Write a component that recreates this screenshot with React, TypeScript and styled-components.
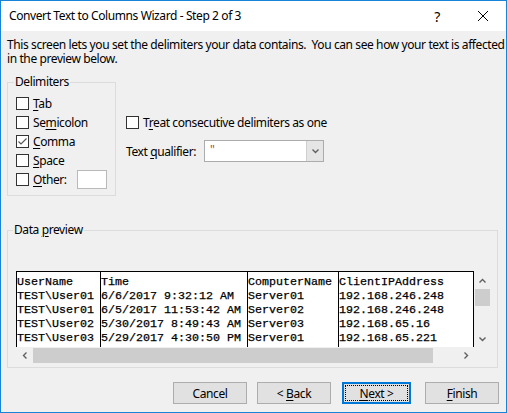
import React from "react";
import styled, { createGlobalStyle } from "styled-components";

const Global = createGlobalStyle`
  html, body { margin: 0; padding: 0; background: #ffffff; }
  * { box-sizing: border-box; }
`;

const UI_FONT = `"Noto Sans", "Liberation Sans", sans-serif`;
const MONO_FONT = `"Liberation Mono", "Courier New", monospace`;

const Window = styled.div`
  width: 507px;
  height: 413px;
  border: 1px solid #1883d7;
  display: flex;
  flex-direction: column;
  font-family: ${UI_FONT};
  font-size: 12px;
  letter-spacing: -0.4px;
  color: #000;
  background: #f0f0f0;
`;

const TitleBar = styled.div`
  height: 30px;
  flex: none;
  background: #ffffff;
  display: flex;
  align-items: center;
  padding-left: 8px;
`;

const Title = styled.div`
  flex: 1;
  font-size: 12px;
  line-height: 16px;
  white-space: nowrap;
`;

const CaptionButton = styled.div`
  width: 46px;
  height: 30px;
  display: flex;
  align-items: center;
  justify-content: center;
  font-size: 14px;
  color: #000;
`;

const Body = styled.div`
  flex: 1;
  display: flex;
  flex-direction: column;
  padding: 0 6px;
`;

const Description = styled.div`
  margin-top: 7px;
  display: flex;
  flex-direction: column;
`;

const DescriptionLine = styled.div`
  height: 14px;
  line-height: 14px;
  white-space: pre;
`;

const TopSection = styled.div`
  display: flex;
  align-items: flex-start;
  margin-top: 16px;
`;

const GroupBox = styled.div<{ $w: number; $h: number }>`
  position: relative;
  width: ${(p) => p.$w}px;
  height: ${(p) => p.$h}px;
  border: 1px solid #dcdcdc;
  flex: none;
`;

const GroupTitle = styled.span<{ $left: number }>`
  position: absolute;
  top: -8px;
  left: ${(p) => p.$left}px;
  padding: 0 1px;
  line-height: 14px;
  background: #f0f0f0;
  white-space: nowrap;
`;

const CheckList = styled.div`
  padding: 11px 0 0 8px;
  display: flex;
  flex-direction: column;
`;

const CheckRow = styled.label`
  height: 19px;
  display: flex;
  align-items: center;
  white-space: nowrap;
`;

const Box = styled.span`
  width: 13px;
  height: 13px;
  flex: none;
  border: 1px solid #333333;
  background: #ffffff;
  margin-right: 4px;
  display: flex;
  align-items: center;
  justify-content: center;
`;

const Key = styled.span`
  text-decoration: underline;
  text-underline-offset: 2px;
`;

const OtherInput = styled.span`
  width: 30px;
  height: 19px;
  margin-left: 10px;
  background: #ffffff;
  border: 1px solid #b9b9b9;
`;

const Options = styled.div`
  margin-left: 10px;
  display: flex;
  flex-direction: column;
`;

const TreatRow = styled(CheckRow)`
  margin-top: 31px;
`;

const QualifierRow = styled.div`
  margin-top: 8px;
  height: 22px;
  display: flex;
  align-items: center;
`;

const QualifierLabel = styled.span`
  width: 78px;
  white-space: nowrap;
`;

const Combo = styled.div`
  width: 120px;
  height: 22px;
  display: flex;
  border: 1px solid #acacac;
  background: #ffffff;
`;

const ComboValue = styled.div`
  flex: 1;
  padding-left: 5px;
  line-height: 18px;
  font-size: 12px;
  color: #c1442c;
`;

const ComboButton = styled.div`
  width: 17px;
  display: flex;
  align-items: center;
  justify-content: center;
  background: #e5e5e5;
  border-left: 1px solid #cfcfcf;
`;

const PreviewGroup = styled(GroupBox)`
  margin-top: 34px;
  padding: 40px 0 0 8px;
`;

const Preview = styled.div`
  display: grid;
  grid-template-columns: 458px 17px;
  grid-template-rows: 76px 17px;
`;

const DataArea = styled.div`
  display: flex;
  overflow: hidden;
  background: #ffffff;
  border: 1px solid #000000;
  border-bottom: none;
  font-family: ${MONO_FONT};
  font-size: 11.67px;
  letter-spacing: 0;
  line-height: 14px;
  -webkit-text-stroke: 0.25px #000;
`;

const Column = styled.div<{ $chars?: number; $last?: boolean }>`
  flex: ${(p) => (p.$last ? "1" : "none")};
  width: ${(p) => (p.$chars ? `${p.$chars * 7}px` : "auto")};
  padding-top: 3px;
  border-right: ${(p) => (p.$last ? "none" : "1px solid #000000")};
  white-space: pre;
  overflow: hidden;
`;

const VScroll = styled.div`
  background: #f0f0f0;
  padding-top: 1px;
  display: flex;
  flex-direction: column;
`;

const HScroll = styled.div`
  background: #f0f0f0;
  display: flex;
  align-items: stretch;
`;

const ArrowCell = styled.div`
  width: 17px;
  height: 17px;
  flex: none;
  display: flex;
  align-items: center;
  justify-content: center;
`;

const VThumb = styled.div`
  height: 17px;
  margin: 0 1px;
  background: #cdcdcd;
`;

const HThumb = styled.div`
  width: 400px;
  margin: 1px 0;
  background: #cdcdcd;
`;

const Fill = styled.div`
  flex: 1;
`;

const Corner = styled.div`
  background: #f0f0f0;
`;

const ButtonRow = styled.div`
  margin-top: 14px;
  display: flex;
  justify-content: flex-end;
  padding-right: 1px;
`;

const Button = styled.div<{ $w: number; $ml?: number; $default?: boolean }>`
  width: ${(p) => p.$w}px;
  height: 22px;
  margin-left: ${(p) => p.$ml ?? 0}px;
  background: #e1e1e1;
  border: ${(p) => (p.$default ? "2px solid #0078d7" : "1px solid #adadad")};
  display: flex;
  align-items: center;
  justify-content: center;
  padding: ${(p) => (p.$default ? "1px" : "0")};
  white-space: pre;
`;

const FocusRing = styled.div`
  flex: 1;
  align-self: stretch;
  border: 1px dotted #000;
  display: flex;
  align-items: center;
  justify-content: center;
`;

const Chevron = ({ dir, color = "#606060" }: { dir: "up" | "down" | "left" | "right"; color?: string }) => {
  const pts: Record<string, string> = {
    up: "0.5,4.5 3.5,1.5 6.5,4.5",
    down: "0.5,1.5 3.5,4.5 6.5,1.5",
    left: "4.5,0.5 1.5,3.5 4.5,6.5",
    right: "1.5,0.5 4.5,3.5 1.5,6.5",
  };
  const vertical = dir === "up" || dir === "down";
  return (
    <svg width={vertical ? 7 : 6} height={vertical ? 6 : 7} viewBox={vertical ? "0 0 7 6" : "0 0 6 7"}>
      <polyline points={pts[dir]} fill="none" stroke={color} strokeWidth="1.4" />
    </svg>
  );
};

const CheckBox = ({ checked }: { checked?: boolean }) => (
  <Box>
    {checked && (
      <svg width="11" height="11" viewBox="0 0 11 11">
        <polyline points="1.5,5.5 4,8 9.5,2.5" fill="none" stroke="#555" strokeWidth="1.1" />
      </svg>
    )}
  </Box>
);

const columns: { chars?: number; lines: string[] }[] = [
  { chars: 12, lines: ["UserName", "TEST\\User01", "TEST\\User01", "TEST\\User02", "TEST\\User03"] },
  {
    chars: 21,
    lines: ["Time", "6/6/2017 9:32:12 AM", "6/5/2017 11:53:42 AM", "5/30/2017 8:49:43 AM", "5/29/2017 4:30:50 PM"],
  },
  { chars: 13, lines: ["ComputerName", "Server01", "Server02", "Server03", "Server01"] },
  { lines: ["ClientIPAddress", "192.168.246.248", "192.168.246.248", "192.168.65.16", "192.168.65.221"] },
];

export default function App() {
  return (
    <>
      <Global />
      <Window>
        <TitleBar>
          <Title>Convert Text to Columns Wizard - Step 2 of 3</Title>
          <CaptionButton>?</CaptionButton>
          <CaptionButton>
            <svg width="10" height="10" viewBox="0 0 10 10">
              <path d="M0 0 L10 10 M10 0 L0 10" stroke="#000" strokeWidth="1" />
            </svg>
          </CaptionButton>
        </TitleBar>
        <Body>
          <Description>
            <DescriptionLine>
              {"This screen lets you set the delimiters your data contains.  You can see how your text is affected"}
            </DescriptionLine>
            <DescriptionLine>{"in the preview below."}</DescriptionLine>
          </Description>
          <TopSection>
            <GroupBox $w={109} $h={114}>
              <GroupTitle $left={6}>Delimiters</GroupTitle>
              <CheckList>
                <CheckRow>
                  <CheckBox />
                  <span>
                    <Key>T</Key>ab
                  </span>
                </CheckRow>
                <CheckRow>
                  <CheckBox />
                  <span>
                    Se<Key>m</Key>icolon
                  </span>
                </CheckRow>
                <CheckRow>
                  <CheckBox checked />
                  <span>
                    <Key>C</Key>omma
                  </span>
                </CheckRow>
                <CheckRow>
                  <CheckBox />
                  <span>
                    <Key>S</Key>pace
                  </span>
                </CheckRow>
                <CheckRow>
                  <CheckBox />
                  <span>
                    <Key>O</Key>ther:
                  </span>
                  <OtherInput />
                </CheckRow>
              </CheckList>
            </GroupBox>
            <Options>
              <TreatRow>
                <CheckBox />
                <span>
                  T<Key>r</Key>eat consecutive delimiters as one
                </span>
              </TreatRow>
              <QualifierRow>
                <QualifierLabel>
                  Text <Key>q</Key>ualifier:
                </QualifierLabel>
                <Combo>
                  <ComboValue>"</ComboValue>
                  <ComboButton>
                    <Chevron dir="down" />
                  </ComboButton>
                </Combo>
              </QualifierRow>
            </Options>
          </TopSection>
          <PreviewGroup $w={491} $h={138}>
            <GroupTitle $left={5}>
              Data <Key>p</Key>review
            </GroupTitle>
            <Preview>
              <DataArea>
                {columns.map((c, i) => (
                  <Column key={i} $chars={c.chars} $last={i === columns.length - 1}>
                    {c.lines.join("\n")}
                  </Column>
                ))}
              </DataArea>
              <VScroll>
                <ArrowCell>
                  <Chevron dir="up" />
                </ArrowCell>
                <VThumb />
                <Fill />
                <ArrowCell>
                  <Chevron dir="down" />
                </ArrowCell>
              </VScroll>
              <HScroll>
                <ArrowCell>
                  <Chevron dir="left" />
                </ArrowCell>
                <HThumb />
                <Fill />
                <ArrowCell>
                  <Chevron dir="right" />
                </ArrowCell>
              </HScroll>
              <Corner />
            </Preview>
          </PreviewGroup>
          <ButtonRow>
            <Button $w={74}>Cancel</Button>
            <Button $w={74} $ml={10}>
              <span>
                {"< "}
                <Key>B</Key>ack
              </span>
            </Button>
            <Button $w={69} $ml={11} $default>
              <FocusRing>
                <span>
                  <Key>N</Key>
                  {"ext >"}
                </span>
              </FocusRing>
            </Button>
            <Button $w={74} $ml={14}>
              <span>
                <Key>F</Key>inish
              </span>
            </Button>
          </ButtonRow>
        </Body>
      </Window>
    </>
  );
}
